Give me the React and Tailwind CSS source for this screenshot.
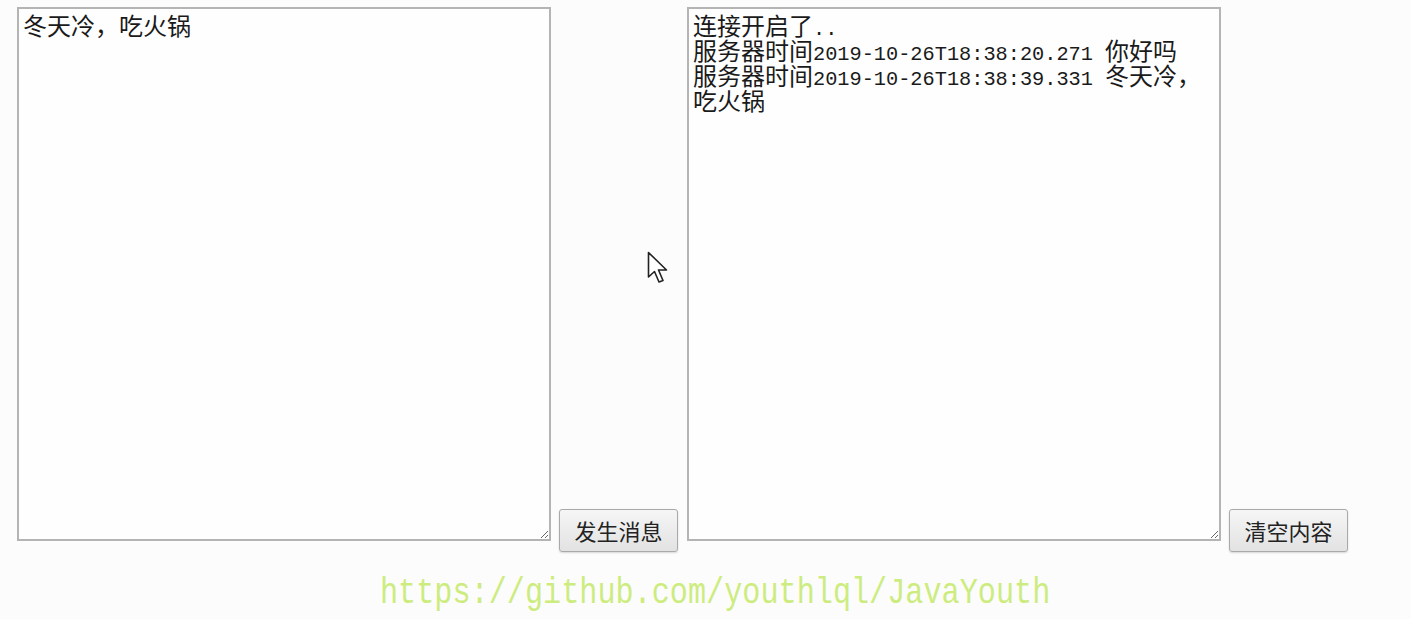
import React from "react";

const cjk = '"Noto Sans CJK SC", "Liberation Mono", monospace';

function Box({ children }) {
  return (
    <div
      className="w-[534px] h-[534px] shrink-0 border-2 border-[#b4b4b4] bg-[#fefefe] resize overflow-hidden px-[4px] py-[3px] text-[24px] leading-[25px] text-[#1a1a1a]"
      style={{ fontFamily: cjk }}
    >
      {children}
    </div>
  );
}

function Ascii({ children }) {
  return (
    <span className="text-[20.3px] leading-[0] font-['Liberation_Mono',monospace]">{children}</span>
  );
}

function Btn({ children }) {
  return (
    <button
      className="mt-[502px] ml-[8px] mr-[9px] h-[43px] w-[119px] shrink-0 rounded-[3px] border border-[#a9a9a9] bg-gradient-to-b from-[#f6f6f6] to-[#e2e2e2] text-[22px] text-[#222] shadow-[0_1px_2px_rgba(0,0,0,0.15)]"
      style={{ fontFamily: cjk }}
    >
      {children}
    </button>
  );
}

export default function App() {
  return (
    <div className="relative w-[1411px] h-[619px] bg-[#fcfcfc] overflow-hidden">
      <div className="flex items-start pl-[17px] pt-[7px]">
        <Box>冬天冷，吃火锅</Box>
        <Btn>发生消息</Btn>
        <Box>
          <div>连接开启了<Ascii>..</Ascii></div>
          <div>
            服务器时间<Ascii>2019-10-26T18:38:20.271 </Ascii>你好吗
          </div>
          <div>
            服务器时间<Ascii>2019-10-26T18:38:39.331 </Ascii>冬天冷，吃火锅
          </div>
        </Box>
        <Btn>清空内容</Btn>
      </div>

      <div className="pl-[380px] pt-[22px]">
        <span className="inline-block origin-top scale-y-[1.2] text-[30.2px] leading-[32px] text-[#cdec80] font-['Liberation_Mono',monospace]">
          https://github.com/youthlql/JavaYouth
        </span>
      </div>

      {/* mouse pointer */}
      <svg
        className="absolute left-[647px] top-[251px]"
        width="24"
        height="36"
        viewBox="0 0 24 36"
      >
        <path
          d="M1.5 1.5 L1.5 26 L7.5 20.5 L12 31 L16 29.5 L11.5 19 L19.5 19 Z"
          fill="#fff"
          stroke="#222"
          strokeWidth="1.6"
          strokeLinejoin="round"
        />
      </svg>
    </div>
  );
}
